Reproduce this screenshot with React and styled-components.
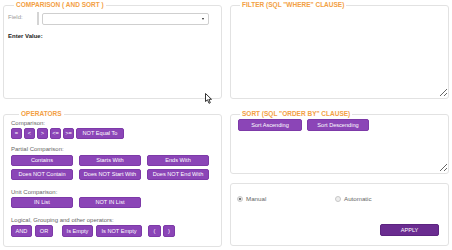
import React from "react";
import styled, { createGlobalStyle } from "styled-components";

const Global = createGlobalStyle`
  html, body { margin: 0; padding: 0; background: #fff; }
  body { font-family: "Liberation Sans", Arial, sans-serif; }
  * { box-sizing: border-box; }
`;

const Page = styled.div`
  position: relative;
  width: 452px;
  height: 250px;
  display: grid;
  grid-template-columns: 219px 219px;
  column-gap: 8px;
  padding-left: 3px;
  align-items: start;
`;

const Column = styled.div`
  display: flex;
  flex-direction: column;
  gap: ${(p) => p.$gap || 10}px;
`;

const Panel = styled.fieldset`
  margin: 0;
  padding: 0;
  min-width: 0;
  height: ${(p) => p.$h}px;
  border: 1px solid #e2e2e2;
  border-radius: 3px;
  ${(p) => (p.$plain ? "margin-top: -1px;" : "")}
`;

const Legend = styled.legend`
  margin-left: ${(p) => p.$ml || 10}px;
  padding: 0 2px;
  font-family: "Liberation Sans", Arial, sans-serif;
  font-weight: bold;
  font-size: 6.5px;
  line-height: 10px;
  color: #f3a043;
  white-space: nowrap;
`;

const FieldRow = styled.div`
  display: flex;
  align-items: center;
  padding: 2px 0 0 4px;
  height: 15px;
`;

const FieldLabel = styled.span`
  font-size: 6px;
  color: #9a9a9a;
  width: 29px;
  align-self: flex-start;
  line-height: 10px;
`;

const Separator = styled.span`
  width: 2px;
  height: 13px;
  background: #d4d4d4;
  margin-right: 3px;
`;

const Select = styled.div`
  width: 167px;
  height: 12px;
  border: 1px solid #cfcfcf;
  border-radius: 2px;
  display: flex;
  align-items: center;
  justify-content: flex-end;
  padding-right: 4px;
`;

const Caret = styled.span`
  width: 0;
  height: 0;
  border-left: 1.5px solid transparent;
  border-right: 1.5px solid transparent;
  border-top: 2.5px solid #222;
`;

const ValueLabel = styled.div`
  font-size: 6px;
  font-weight: bold;
  color: #222;
  padding: 7px 0 0 4px;
  line-height: 8px;
`;

const OpsBody = styled.div`
  padding: 0 0 0 7px;
  display: flex;
  flex-direction: column;
`;

const Section = styled.div`
  margin-top: ${(p) => p.$mt || 0}px;
  display: flex;
  flex-direction: column;
`;

const SectionLabel = styled.div`
  font-size: 6px;
  color: #666;
  line-height: 8px;
  margin-bottom: ${(p) => p.$mb ?? 1}px;
`;

const Row = styled.div`
  display: flex;
  gap: ${(p) => p.$gap ?? 2}px;
  margin-top: ${(p) => p.$mt || 0}px;
`;

const Btn = styled.button`
  all: unset;
  box-sizing: border-box;
  width: ${(p) => p.$w}px;
  height: ${(p) => p.$h || 11}px;
  margin-left: ${(p) => p.$ml || 0}px;
  background: ${(p) => (p.$dark ? "#6a2c90" : "#8b45b7")};
  border: 1px solid ${(p) => (p.$dark ? "#5c2480" : "#7d3aa8")};
  border-radius: 2px;
  color: #fff;
  font-family: "Liberation Sans", Arial, sans-serif;
  font-size: ${(p) => p.$fs || 5.6}px;
  line-height: ${(p) => (p.$h || 11) - 2}px;
  text-align: center;
  white-space: nowrap;
  overflow: hidden;
`;

const Area = styled.textarea`
  display: block;
  width: 100%;
  height: ${(p) => p.$h}px;
  border: none;
  outline: none;
  margin: 0;
  padding: 0;
  resize: vertical;
  background: transparent;
  border-radius: 3px;
`;

const SortButtons = styled.div`
  display: flex;
  gap: 5px;
  padding: 0 0 0 7px;
`;

const ModeBody = styled.div`
  display: flex;
  flex-direction: column;
  padding: 11px 9px 0 6px;
  height: 100%;
`;

const RadioRow = styled.div`
  display: flex;
  align-items: center;
`;

const RadioItem = styled.label`
  display: flex;
  align-items: center;
  gap: 3px;
  width: ${(p) => p.$w || 98}px;
  font-size: 6.2px;
  color: #666;
`;

const Radio = styled.span`
  width: 6px;
  height: 6px;
  border-radius: 50%;
  border: 1px solid #c8c8c8;
  background: ${(p) => (p.$on ? "radial-gradient(circle, #777 0 1.3px, #eee 1.6px)" : "#eee")};
`;

const ApplyWrap = styled.div`
  display: flex;
  justify-content: flex-end;
  margin-top: 22px;
`;

const Cursor = styled.svg`
  position: absolute;
  left: 205px;
  top: 93px;
`;

export default function App() {
  return (
    <>
      <Global />
      <Page>
        <Column $gap={10}>
          <Panel $h={99}>
            <Legend $ml={10}>COMPARISON ( AND SORT )</Legend>
            <FieldRow>
              <FieldLabel>Field:</FieldLabel>
              <Separator />
              <Select>
                <Caret />
              </Select>
            </FieldRow>
            <ValueLabel>Enter Value:</ValueLabel>
          </Panel>
          <Panel $h={138}>
            <Legend $ml={15}>OPERATORS</Legend>
            <OpsBody>
              <Section>
                <SectionLabel>Comparison:</SectionLabel>
                <Row $gap={2}>
                  <Btn $w={11}>=</Btn>
                  <Btn $w={11}>&lt;</Btn>
                  <Btn $w={11}>&gt;</Btn>
                  <Btn $w={11}>&lt;=</Btn>
                  <Btn $w={11}>&gt;=</Btn>
                  <Btn $w={48}>NOT Equal To</Btn>
                </Row>
              </Section>
              <Section $mt={6}>
                <SectionLabel $mb={2}>Partial Comparison:</SectionLabel>
                <Row $gap={6}>
                  <Btn $w={62}>Contains</Btn>
                  <Btn $w={62}>Starts With</Btn>
                  <Btn $w={62}>Ends With</Btn>
                </Row>
                <Row $gap={6} $mt={3}>
                  <Btn $w={62}>Does NOT Contain</Btn>
                  <Btn $w={62}>Does NOT Start With</Btn>
                  <Btn $w={62}>Does NOT End With</Btn>
                </Row>
              </Section>
              <Section $mt={8}>
                <SectionLabel>Unit Comparison:</SectionLabel>
                <Row $gap={6}>
                  <Btn $w={62}>IN List</Btn>
                  <Btn $w={62}>NOT IN List</Btn>
                </Row>
              </Section>
              <Section $mt={8}>
                <SectionLabel>Logical, Grouping and other operators:</SectionLabel>
                <Row $gap={0}>
                  <Btn $w={21} $h={12}>AND</Btn>
                  <Btn $w={18} $h={12} $ml={3}>OR</Btn>
                  <Btn $w={31} $h={12} $ml={9}>Is Empty</Btn>
                  <Btn $w={46} $h={12} $ml={3}>Is NOT Empty</Btn>
                  <Btn $w={13} $h={12} $ml={6}>(</Btn>
                  <Btn $w={12} $h={12} $ml={2}>)</Btn>
                </Row>
              </Section>
            </OpsBody>
          </Panel>
        </Column>
        <Column $gap={10}>
          <Panel $h={99}>
            <Legend $ml={9}>FILTER (SQL "WHERE" CLAUSE)</Legend>
            <Area $h={87} />
          </Panel>
          <Panel $h={65}>
            <Legend $ml={9}>SORT (SQL "ORDER BY" CLAUSE)</Legend>
            <SortButtons>
              <Btn $w={64} $h={12}>Sort Ascending</Btn>
              <Btn $w={62} $h={12}>Sort Descending</Btn>
            </SortButtons>
            <Area $h={41} />
          </Panel>
          <Panel $h={63} $plain>
            <ModeBody>
              <RadioRow>
                <RadioItem $w={98}>
                  <Radio $on />
                  Manual
                </RadioItem>
                <RadioItem>
                  <Radio />
                  Automatic
                </RadioItem>
              </RadioRow>
              <ApplyWrap>
                <Btn $w={59} $h={12} $dark>APPLY</Btn>
              </ApplyWrap>
            </ModeBody>
          </Panel>
        </Column>
        <Cursor width="8" height="11" viewBox="0 0 8 11">
          <path d="M0.5 0.5 L0.5 8.5 L2.5 6.8 L4 10.3 L5.3 9.7 L3.9 6.3 L6.5 6.3 Z" fill="#fff" stroke="#000" strokeWidth="0.8" strokeLinejoin="round" />
        </Cursor>
      </Page>
    </>
  );
}
